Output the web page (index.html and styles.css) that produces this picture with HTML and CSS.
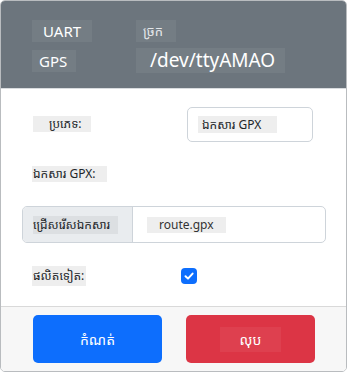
FILE: index.html
```html
<!DOCTYPE html>
<html lang="km">
<head>
    <meta charset="UTF-8">
    <meta name="viewport" content="width=device-width, initial-scale=1.0">
    <title>GPS UART</title>
    <link rel="stylesheet" href="styles.css">
</head>
<body>

    <div class="card">
        <div class="card-header">
            <div class="hdr-grid">
                <span class="tag tag-sm">UART</span>
                <span class="tag tag-khmer">ច្រក</span>
                <span class="tag tag-gps">GPS</span>
                <span class="tag tag-port">/dev/ttyAMAO</span>
            </div>
        </div>

        <div class="card-body">
            <div class="row row-type">
                <span class="lbl lbl-type">ប្រភេទ:</span>
                <div class="select-box">
                    <span class="lbl">ឯកសារ GPX</span>
                </div>
            </div>

            <div class="row row-file-lbl">
                <span class="lbl lbl-file">ឯកសារ GPX:</span>
            </div>

            <div class="input-group">
                <div class="addon"><span class="addon-text">ជ្រើសរើសឯកសារ</span></div>
                <div class="file-name"><span class="lbl lbl-route">route.gpx</span></div>
            </div>

            <div class="row row-check">
                <span class="lbl lbl-check">ផលិតទៀត:</span>
                <span class="checkbox">
                    <svg width="12" height="12" viewBox="0 0 12 12">
                        <path d="M2.5 6.2 L5 8.6 L9.6 3.6" fill="none" stroke="#fff" stroke-width="2" stroke-linecap="round" stroke-linejoin="round"/>
                    </svg>
                </span>
            </div>
        </div>

        <div class="card-footer">
            <button class="btn btn-blue"><span>កំណត់</span></button>
            <button class="btn btn-red"><span class="btn-shade">លុប</span></button>
        </div>
    </div>

</body>
</html>
```

FILE: styles.css
```css
body {
    margin: 0;
    font-family: "Noto Sans", "Noto Sans Khmer", "Open Sans", sans-serif;
    background-color: #fff;
}

.card {
    width: 345px;
    height: 370px;
    border: 1px solid #b9bcbf;
    border-radius: 5px;
    overflow: hidden;
    display: flex;
    flex-direction: column;
}

.card-header {
    height: 88px;
    background-color: #6c757d;
    border-bottom: 1px solid #d9dcdf;
    color: #fff;
    padding: 19px 0 0 31px;
    box-sizing: border-box;
}

.hdr-grid {
    display: grid;
    grid-template-columns: 104px auto;
    row-gap: 6px;
    align-items: start;
    justify-items: start;
}

.tag {
    background-color: rgba(255, 255, 255, 0.06);
    font-size: 15px;
    line-height: 22px;
    padding: 0 11px;
}

.tag-gps {
    padding: 0 9px 0 7px;
    margin-top: 2px;
}

.tag-khmer {
    font-size: 13px;
    padding: 0 13px 0 7px;
    color: #e4e7ea;
}

.tag-port {
    font-size: 19px;
    line-height: 25px;
    padding: 0 10px 0 14px;
}

.card-body {
    flex: 1;
    padding: 16px 20px 0 21px;
    color: #212529;
}

.lbl {
    background-color: #eeeeee;
    font-size: 12px;
    line-height: 16px;
    padding: 0 4px;
}

.row {
    display: flex;
    align-items: center;
}

.row-type {
    height: 38px;
}

.lbl-type {
    margin-left: 11px;
    padding: 0 16px;
    width: 26px;
}

.select-box {
    margin-left: 96px;
    width: 126px;
    height: 35px;
    border: 1px solid #ced4da;
    border-radius: 5px;
    display: flex;
    align-items: center;
    padding-left: 10px;
    box-sizing: border-box;
}

.select-box .lbl {
    padding: 0 16px 0 4px;
    line-height: 17px;
}

.row-file-lbl {
    margin-top: 23px;
    height: 16px;
}

.lbl-file {
    margin-left: 10px;
    padding: 0 12px 0 1px;
}

.input-group {
    margin-top: 24px;
    display: flex;
    height: 37px;
    border: 1px solid #ced4da;
    border-radius: 5px;
    overflow: hidden;
    box-sizing: border-box;
}

.addon {
    width: 110px;
    background-color: #e9ecef;
    border-right: 1px solid #ced4da;
    display: flex;
    align-items: center;
    padding-left: 10px;
    box-sizing: border-box;
}

.addon-text {
    background-color: #dcdfe2;
    font-size: 12px;
    line-height: 18px;
    padding-right: 8px;
}

.file-name {
    flex: 1;
    display: flex;
    align-items: center;
    padding-left: 14px;
}

.lbl-route {
    padding: 0 12px;
    font-size: 12px;
    color: #333;
}

.row-check {
    margin-top: 23px;
    height: 20px;
}

.lbl-check {
    margin-left: 10px;
    padding: 2px 2px 2px 1px;
}

.checkbox {
    margin-left: 95px;
    width: 16px;
    height: 16px;
    background-color: #0d6efd;
    border-radius: 4px;
    display: flex;
    align-items: center;
    justify-content: center;
}

.card-footer {
    height: 65px;
    background-color: #f7f7f7;
    border-top: 1px solid #d9d9d9;
    display: flex;
    align-items: center;
    padding: 0 31px 0 32px;
    gap: 24px;
    box-sizing: border-box;
}

.btn {
    flex: 1;
    height: 48px;
    border: none;
    border-radius: 5px;
    color: #fff;
    font-family: "Noto Sans", "Noto Sans Khmer", sans-serif;
    font-size: 14px;
    cursor: pointer;
}

.btn-blue {
    background-color: #0d6efd;
}

.btn-red {
    background-color: #dc3545;
}

.btn-shade {
    background-color: rgba(255, 255, 255, 0.06);
    padding: 3px 20px;
}
```
